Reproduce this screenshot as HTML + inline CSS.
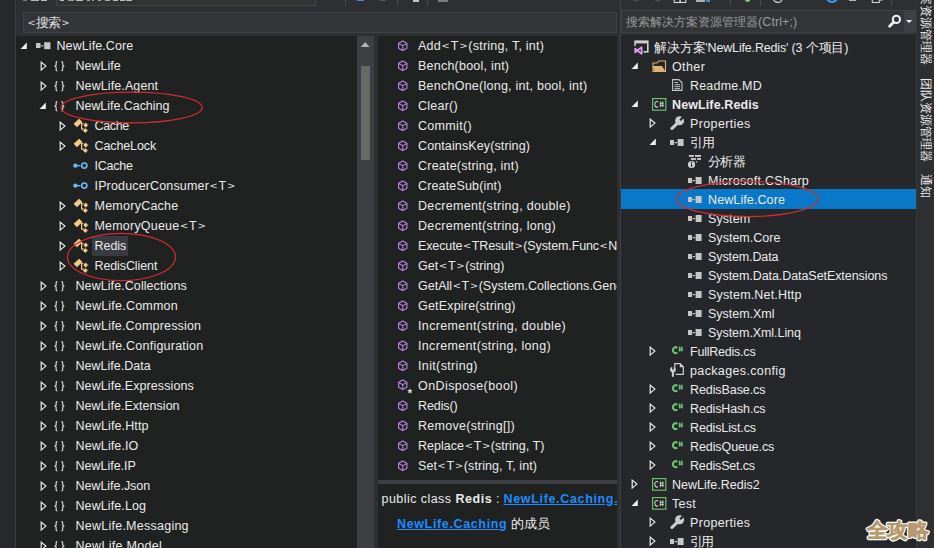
<!DOCTYPE html>
<html><head><meta charset="utf-8">
<style>
*{margin:0;padding:0;box-sizing:border-box}
html,body{width:934px;height:548px;overflow:hidden;background:#2d2f33;font-family:"Liberation Sans",sans-serif;font-size:12.5px;color:#ebebeb}
.a{position:absolute;display:block}
.t{position:absolute;white-space:nowrap;line-height:20px;height:20px}
.s{position:absolute;white-space:nowrap;line-height:19px;height:19px}
.clip{position:absolute;overflow:hidden}
u{text-decoration:underline}
.lt{display:inline-block;transform:scale(1.0,0.72);margin:0 1.1px}
</style></head><body>
<div class="a" style="left:0;top:0;width:15px;height:548px;background:#26282c"></div>
<div class="a" style="left:15px;top:0;width:1px;height:548px;background:#3b3d41"></div>
<div class="a" style="left:23px;top:12px;width:594px;height:21px;background:#333539;border:1px solid #404246"></div>
<div class="t" style="left:27px;top:12.5px;color:#e0e0e0;letter-spacing:-0.6px"><span class="lt">&lt;</span>搜索<span class="lt">&gt;</span></div>
<div class="a" style="left:56px;top:-14px;width:260px;height:20px;background:#333333;border:1px solid #464646"></div>
<div class="a" style="left:23px;top:0;width:4px;height:1.2px;background:#8a8c90;opacity:0.8"></div>
<div class="a" style="left:31px;top:0;width:8px;height:1.2px;background:#e0e0e0;opacity:0.8"></div>
<div class="a" style="left:41px;top:0;width:6px;height:1.2px;background:#e0e0e0;opacity:0.8"></div>
<div class="a" style="left:60px;top:0;width:4px;height:1.2px;background:#e0e0e0;opacity:0.8"></div>
<div class="a" style="left:68px;top:0;width:6px;height:1.2px;background:#b8b8b8;opacity:0.8"></div>
<div class="a" style="left:76px;top:0;width:7px;height:1.2px;background:#e0e0e0;opacity:0.8"></div>
<div class="a" style="left:87px;top:0;width:3px;height:1.2px;background:#c8c8c8;opacity:0.8"></div>
<div class="a" style="left:91.5px;top:0;width:2.5px;height:1.2px;background:#b0b0b0;opacity:0.8"></div>
<div class="a" style="left:97.5px;top:0;width:3.0px;height:1.2px;background:#c0c0c0;opacity:0.8"></div>
<div class="a" style="left:105px;top:0;width:5px;height:1.2px;background:#c8c8c8;opacity:0.8"></div>
<div class="a" style="left:112.5px;top:0;width:5.5px;height:1.2px;background:#e0e0e0;opacity:0.8"></div>
<div class="a" style="left:120px;top:0;width:4.5px;height:1.2px;background:#e0e0e0;opacity:0.8"></div>
<div class="a" style="left:125.5px;top:0;width:6.5px;height:1.2px;background:#e0e0e0;opacity:0.8"></div>
<div class="a" style="left:357px;top:0;width:7px;height:1.2px;background:#4aa0e8;opacity:0.8"></div>
<div class="a" style="left:379px;top:0;width:6.5px;height:1.2px;background:#5a5a5a;opacity:0.8"></div>
<div class="a" style="left:412.5px;top:0;width:6.5px;height:1.5px;background:#e8e8e8;opacity:0.8"></div>
<div class="a" style="left:438px;top:0;width:10px;height:1.5px;background:#909090;opacity:0.8"></div>
<div class="a" style="left:696px;top:0;width:9px;height:1.5px;background:#d0d0d0;opacity:0.8"></div>
<div class="a" style="left:706px;top:0;width:4px;height:2.2px;background:#4aa0e8;opacity:0.8"></div>
<div class="a" style="left:849px;top:0;width:7px;height:1.2px;background:#e0e0e0;opacity:0.8"></div>
<div class="a" style="left:345px;top:0;width:1px;height:5.5px;background:#4a4a4e"></div>
<div class="a" style="left:397px;top:0;width:1px;height:5.5px;background:#4a4a4e"></div>
<div class="a" style="left:427px;top:0;width:1px;height:5.5px;background:#4a4a4e"></div>
<div class="a" style="left:730px;top:0;width:1px;height:5.5px;background:#4a4a4e"></div>
<div class="a" style="left:760px;top:0;width:1px;height:5.5px;background:#4a4a4e"></div>
<div class="a" style="left:891px;top:0;width:1px;height:5.5px;background:#4a4a4e"></div>
<svg class="a" style="left:0;top:0" width="934" height="8"><circle cx="636" cy="-3" r="4.6" fill="#4a4c50"/><circle cx="657.7" cy="-3" r="4.6" fill="#4a4c50"/><rect x="674.2" y="-4" width="11.6" height="6.5" fill="none" stroke="#d8d8d8" stroke-width="1.1"/><rect x="679.4" y="-4" width="1.4" height="6" fill="#d8d8d8"/><circle cx="747.6" cy="-0.5" r="2.6" fill="#7ad07a"/><circle cx="777.8" cy="-2.2" r="4.6" fill="none" stroke="#d8d8d8" stroke-width="1.2"/><circle cx="832" cy="-3" r="5" fill="none" stroke="#4aa0e8" stroke-width="2.2"/><rect x="872.3" y="-4" width="7" height="6.5" fill="none" stroke="#d0d0d0" stroke-width="1.1"/><rect x="880" y="-1" width="2.6" height="1.6" fill="#d0d0d0"/></svg>
<div class="clip" style="left:16px;top:36px;width:341px;height:512px;background:#202221">
<svg class="a" style="left:4px;top:6px" width="8" height="8"><polygon points="0.5,7 6.8,0.6 6.8,7" fill="#f0f0f0"/></svg>
<svg class="a" style="left:20px;top:6px" width="16" height="9"><rect x="0" y="1" width="4.5" height="5" fill="#c6c6c6"/><rect x="5" y="3.2" width="2.5" height="1.2" fill="#c6c6c6"/><rect x="8.2" y="0.2" width="6.2" height="7" fill="#c6c6c6"/></svg>
<div class="t" style="left:40.5px;top:0px;letter-spacing:0.085px;">NewLife.Core</div>
<svg class="a" style="left:24px;top:25px" width="8" height="11"><polygon points="1.2,1.1 5.9,5.1 1.2,9.1" fill="none" stroke="#f2f2f2" stroke-width="1.15"/></svg>
<svg class="a" style="left:38px;top:25px" width="12" height="11"><path d="M3.4,0.6 C1.8,0.6 2.2,2 2.2,3.6 C2.2,4.8 1.4,5 0.6,5.2 C1.4,5.4 2.2,5.6 2.2,6.8 C2.2,8.4 1.8,9.8 3.4,9.8" fill="none" stroke="#c8c8c8" stroke-width="1.3"/><path d="M7.4,0.6 C9,0.6 8.6,2 8.6,3.6 C8.6,4.8 9.4,5 10.2,5.2 C9.4,5.4 8.6,5.6 8.6,6.8 C8.6,8.4 9,9.8 7.4,9.8" fill="none" stroke="#c8c8c8" stroke-width="1.3"/></svg>
<div class="t" style="left:59.5px;top:20px;letter-spacing:0.020px;">NewLife</div>
<svg class="a" style="left:24px;top:45px" width="8" height="11"><polygon points="1.2,1.1 5.9,5.1 1.2,9.1" fill="none" stroke="#f2f2f2" stroke-width="1.15"/></svg>
<svg class="a" style="left:38px;top:45px" width="12" height="11"><path d="M3.4,0.6 C1.8,0.6 2.2,2 2.2,3.6 C2.2,4.8 1.4,5 0.6,5.2 C1.4,5.4 2.2,5.6 2.2,6.8 C2.2,8.4 1.8,9.8 3.4,9.8" fill="none" stroke="#c8c8c8" stroke-width="1.3"/><path d="M7.4,0.6 C9,0.6 8.6,2 8.6,3.6 C8.6,4.8 9.4,5 10.2,5.2 C9.4,5.4 8.6,5.6 8.6,6.8 C8.6,8.4 9,9.8 7.4,9.8" fill="none" stroke="#c8c8c8" stroke-width="1.3"/></svg>
<div class="t" style="left:59.5px;top:40px;letter-spacing:0.096px;">NewLife.Agent</div>
<svg class="a" style="left:23px;top:66px" width="8" height="8"><polygon points="0.5,7 6.8,0.6 6.8,7" fill="#f0f0f0"/></svg>
<svg class="a" style="left:38px;top:65px" width="12" height="11"><path d="M3.4,0.6 C1.8,0.6 2.2,2 2.2,3.6 C2.2,4.8 1.4,5 0.6,5.2 C1.4,5.4 2.2,5.6 2.2,6.8 C2.2,8.4 1.8,9.8 3.4,9.8" fill="none" stroke="#c8c8c8" stroke-width="1.3"/><path d="M7.4,0.6 C9,0.6 8.6,2 8.6,3.6 C8.6,4.8 9.4,5 10.2,5.2 C9.4,5.4 8.6,5.6 8.6,6.8 C8.6,8.4 9,9.8 7.4,9.8" fill="none" stroke="#c8c8c8" stroke-width="1.3"/></svg>
<div class="t" style="left:59.5px;top:60px;letter-spacing:-0.045px;">NewLife.Caching</div>
<svg class="a" style="left:43px;top:85px" width="8" height="11"><polygon points="1.2,1.1 5.9,5.1 1.2,9.1" fill="none" stroke="#f2f2f2" stroke-width="1.15"/></svg>
<svg class="a" style="left:57px;top:82px" width="17" height="17"><polygon points="0.6,5.8 6.1,0.7 9.4,4 3.9,9.3" fill="#f2c98b"/><path d="M8,5.7 H10.4 M8.6,5.7 V11.2 H11.4" fill="none" stroke="#f2c98b" stroke-width="1.2"/><polygon points="9.9,7.1 12.7,4.3 15.5,7.1 12.7,9.9" fill="#f2c98b" stroke="#202221" stroke-width="0.7"/><polygon points="9.5,12.5 12.3,9.7 15.1,12.5 12.3,15.3" fill="#f2c98b" stroke="#202221" stroke-width="0.7"/></svg>
<div class="t" style="left:78.5px;top:80px;letter-spacing:-0.338px;">Cache</div>
<svg class="a" style="left:43px;top:105px" width="8" height="11"><polygon points="1.2,1.1 5.9,5.1 1.2,9.1" fill="none" stroke="#f2f2f2" stroke-width="1.15"/></svg>
<svg class="a" style="left:57px;top:102px" width="17" height="17"><polygon points="0.6,5.8 6.1,0.7 9.4,4 3.9,9.3" fill="#f2c98b"/><path d="M8,5.7 H10.4 M8.6,5.7 V11.2 H11.4" fill="none" stroke="#f2c98b" stroke-width="1.2"/><polygon points="9.9,7.1 12.7,4.3 15.5,7.1 12.7,9.9" fill="#f2c98b" stroke="#202221" stroke-width="0.7"/><polygon points="9.5,12.5 12.3,9.7 15.1,12.5 12.3,15.3" fill="#f2c98b" stroke="#202221" stroke-width="0.7"/></svg>
<div class="t" style="left:78.5px;top:100px;letter-spacing:-0.103px;">CacheLock</div>
<svg class="a" style="left:57px;top:126px" width="16" height="8"><circle cx="2.4" cy="3.6" r="2.2" fill="#6cb8f4"/><rect x="3.5" y="3" width="4" height="1.3" fill="#6cb8f4"/><circle cx="11.3" cy="3.6" r="2.6" fill="none" stroke="#6cb8f4" stroke-width="1.6"/></svg>
<div class="t" style="left:78.5px;top:120px;letter-spacing:-0.219px;">ICache</div>
<svg class="a" style="left:57px;top:146px" width="16" height="8"><circle cx="2.4" cy="3.6" r="2.2" fill="#6cb8f4"/><rect x="3.5" y="3" width="4" height="1.3" fill="#6cb8f4"/><circle cx="11.3" cy="3.6" r="2.6" fill="none" stroke="#6cb8f4" stroke-width="1.6"/></svg>
<div class="t" style="left:78.5px;top:140px;letter-spacing:0.153px;">IProducerConsumer<span class="lt">&lt;</span>T<span class="lt">&gt;</span></div>
<svg class="a" style="left:43px;top:165px" width="8" height="11"><polygon points="1.2,1.1 5.9,5.1 1.2,9.1" fill="none" stroke="#f2f2f2" stroke-width="1.15"/></svg>
<svg class="a" style="left:57px;top:162px" width="17" height="17"><polygon points="0.6,5.8 6.1,0.7 9.4,4 3.9,9.3" fill="#f2c98b"/><path d="M8,5.7 H10.4 M8.6,5.7 V11.2 H11.4" fill="none" stroke="#f2c98b" stroke-width="1.2"/><polygon points="9.9,7.1 12.7,4.3 15.5,7.1 12.7,9.9" fill="#f2c98b" stroke="#202221" stroke-width="0.7"/><polygon points="9.5,12.5 12.3,9.7 15.1,12.5 12.3,15.3" fill="#f2c98b" stroke="#202221" stroke-width="0.7"/></svg>
<div class="t" style="left:78.5px;top:160px;letter-spacing:0.248px;">MemoryCache</div>
<svg class="a" style="left:43px;top:185px" width="8" height="11"><polygon points="1.2,1.1 5.9,5.1 1.2,9.1" fill="none" stroke="#f2f2f2" stroke-width="1.15"/></svg>
<svg class="a" style="left:57px;top:182px" width="17" height="17"><polygon points="0.6,5.8 6.1,0.7 9.4,4 3.9,9.3" fill="#f2c98b"/><path d="M8,5.7 H10.4 M8.6,5.7 V11.2 H11.4" fill="none" stroke="#f2c98b" stroke-width="1.2"/><polygon points="9.9,7.1 12.7,4.3 15.5,7.1 12.7,9.9" fill="#f2c98b" stroke="#202221" stroke-width="0.7"/><polygon points="9.5,12.5 12.3,9.7 15.1,12.5 12.3,15.3" fill="#f2c98b" stroke="#202221" stroke-width="0.7"/></svg>
<div class="t" style="left:78.5px;top:180px;letter-spacing:0.199px;">MemoryQueue<span class="lt">&lt;</span>T<span class="lt">&gt;</span></div>
<svg class="a" style="left:43px;top:205px" width="8" height="11"><polygon points="1.2,1.1 5.9,5.1 1.2,9.1" fill="none" stroke="#f2f2f2" stroke-width="1.15"/></svg>
<svg class="a" style="left:57px;top:202px" width="17" height="17"><polygon points="0.6,5.8 6.1,0.7 9.4,4 3.9,9.3" fill="#f2c98b"/><path d="M8,5.7 H10.4 M8.6,5.7 V11.2 H11.4" fill="none" stroke="#f2c98b" stroke-width="1.2"/><polygon points="9.9,7.1 12.7,4.3 15.5,7.1 12.7,9.9" fill="#f2c98b" stroke="#202221" stroke-width="0.7"/><polygon points="9.5,12.5 12.3,9.7 15.1,12.5 12.3,15.3" fill="#f2c98b" stroke="#202221" stroke-width="0.7"/></svg>
<div class="a" style="left:76px;top:200px;width:36px;height:20px;background:#383b42"></div>
<div class="t" style="left:78.5px;top:200px;letter-spacing:-0.046px;">Redis</div>
<svg class="a" style="left:43px;top:225px" width="8" height="11"><polygon points="1.2,1.1 5.9,5.1 1.2,9.1" fill="none" stroke="#f2f2f2" stroke-width="1.15"/></svg>
<svg class="a" style="left:57px;top:222px" width="17" height="17"><polygon points="0.6,5.8 6.1,0.7 9.4,4 3.9,9.3" fill="#f2c98b"/><path d="M8,5.7 H10.4 M8.6,5.7 V11.2 H11.4" fill="none" stroke="#f2c98b" stroke-width="1.2"/><polygon points="9.9,7.1 12.7,4.3 15.5,7.1 12.7,9.9" fill="#f2c98b" stroke="#202221" stroke-width="0.7"/><polygon points="9.5,12.5 12.3,9.7 15.1,12.5 12.3,15.3" fill="#f2c98b" stroke="#202221" stroke-width="0.7"/></svg>
<div class="t" style="left:78.5px;top:220px;letter-spacing:-0.104px;">RedisClient</div>
<svg class="a" style="left:24px;top:245px" width="8" height="11"><polygon points="1.2,1.1 5.9,5.1 1.2,9.1" fill="none" stroke="#f2f2f2" stroke-width="1.15"/></svg>
<svg class="a" style="left:38px;top:245px" width="12" height="11"><path d="M3.4,0.6 C1.8,0.6 2.2,2 2.2,3.6 C2.2,4.8 1.4,5 0.6,5.2 C1.4,5.4 2.2,5.6 2.2,6.8 C2.2,8.4 1.8,9.8 3.4,9.8" fill="none" stroke="#c8c8c8" stroke-width="1.3"/><path d="M7.4,0.6 C9,0.6 8.6,2 8.6,3.6 C8.6,4.8 9.4,5 10.2,5.2 C9.4,5.4 8.6,5.6 8.6,6.8 C8.6,8.4 9,9.8 7.4,9.8" fill="none" stroke="#c8c8c8" stroke-width="1.3"/></svg>
<div class="t" style="left:59.5px;top:240px;letter-spacing:0.077px;">NewLife.Collections</div>
<svg class="a" style="left:24px;top:265px" width="8" height="11"><polygon points="1.2,1.1 5.9,5.1 1.2,9.1" fill="none" stroke="#f2f2f2" stroke-width="1.15"/></svg>
<svg class="a" style="left:38px;top:265px" width="12" height="11"><path d="M3.4,0.6 C1.8,0.6 2.2,2 2.2,3.6 C2.2,4.8 1.4,5 0.6,5.2 C1.4,5.4 2.2,5.6 2.2,6.8 C2.2,8.4 1.8,9.8 3.4,9.8" fill="none" stroke="#c8c8c8" stroke-width="1.3"/><path d="M7.4,0.6 C9,0.6 8.6,2 8.6,3.6 C8.6,4.8 9.4,5 10.2,5.2 C9.4,5.4 8.6,5.6 8.6,6.8 C8.6,8.4 9,9.8 7.4,9.8" fill="none" stroke="#c8c8c8" stroke-width="1.3"/></svg>
<div class="t" style="left:59.5px;top:260px;letter-spacing:0.220px;">NewLife.Common</div>
<svg class="a" style="left:24px;top:285px" width="8" height="11"><polygon points="1.2,1.1 5.9,5.1 1.2,9.1" fill="none" stroke="#f2f2f2" stroke-width="1.15"/></svg>
<svg class="a" style="left:38px;top:285px" width="12" height="11"><path d="M3.4,0.6 C1.8,0.6 2.2,2 2.2,3.6 C2.2,4.8 1.4,5 0.6,5.2 C1.4,5.4 2.2,5.6 2.2,6.8 C2.2,8.4 1.8,9.8 3.4,9.8" fill="none" stroke="#c8c8c8" stroke-width="1.3"/><path d="M7.4,0.6 C9,0.6 8.6,2 8.6,3.6 C8.6,4.8 9.4,5 10.2,5.2 C9.4,5.4 8.6,5.6 8.6,6.8 C8.6,8.4 9,9.8 7.4,9.8" fill="none" stroke="#c8c8c8" stroke-width="1.3"/></svg>
<div class="t" style="left:59.5px;top:280px;letter-spacing:0.182px;">NewLife.Compression</div>
<svg class="a" style="left:24px;top:305px" width="8" height="11"><polygon points="1.2,1.1 5.9,5.1 1.2,9.1" fill="none" stroke="#f2f2f2" stroke-width="1.15"/></svg>
<svg class="a" style="left:38px;top:305px" width="12" height="11"><path d="M3.4,0.6 C1.8,0.6 2.2,2 2.2,3.6 C2.2,4.8 1.4,5 0.6,5.2 C1.4,5.4 2.2,5.6 2.2,6.8 C2.2,8.4 1.8,9.8 3.4,9.8" fill="none" stroke="#c8c8c8" stroke-width="1.3"/><path d="M7.4,0.6 C9,0.6 8.6,2 8.6,3.6 C8.6,4.8 9.4,5 10.2,5.2 C9.4,5.4 8.6,5.6 8.6,6.8 C8.6,8.4 9,9.8 7.4,9.8" fill="none" stroke="#c8c8c8" stroke-width="1.3"/></svg>
<div class="t" style="left:59.5px;top:300px;letter-spacing:0.237px;">NewLife.Configuration</div>
<svg class="a" style="left:24px;top:325px" width="8" height="11"><polygon points="1.2,1.1 5.9,5.1 1.2,9.1" fill="none" stroke="#f2f2f2" stroke-width="1.15"/></svg>
<svg class="a" style="left:38px;top:325px" width="12" height="11"><path d="M3.4,0.6 C1.8,0.6 2.2,2 2.2,3.6 C2.2,4.8 1.4,5 0.6,5.2 C1.4,5.4 2.2,5.6 2.2,6.8 C2.2,8.4 1.8,9.8 3.4,9.8" fill="none" stroke="#c8c8c8" stroke-width="1.3"/><path d="M7.4,0.6 C9,0.6 8.6,2 8.6,3.6 C8.6,4.8 9.4,5 10.2,5.2 C9.4,5.4 8.6,5.6 8.6,6.8 C8.6,8.4 9,9.8 7.4,9.8" fill="none" stroke="#c8c8c8" stroke-width="1.3"/></svg>
<div class="t" style="left:59.5px;top:320px;letter-spacing:0.020px;">NewLife.Data</div>
<svg class="a" style="left:24px;top:345px" width="8" height="11"><polygon points="1.2,1.1 5.9,5.1 1.2,9.1" fill="none" stroke="#f2f2f2" stroke-width="1.15"/></svg>
<svg class="a" style="left:38px;top:345px" width="12" height="11"><path d="M3.4,0.6 C1.8,0.6 2.2,2 2.2,3.6 C2.2,4.8 1.4,5 0.6,5.2 C1.4,5.4 2.2,5.6 2.2,6.8 C2.2,8.4 1.8,9.8 3.4,9.8" fill="none" stroke="#c8c8c8" stroke-width="1.3"/><path d="M7.4,0.6 C9,0.6 8.6,2 8.6,3.6 C8.6,4.8 9.4,5 10.2,5.2 C9.4,5.4 8.6,5.6 8.6,6.8 C8.6,8.4 9,9.8 7.4,9.8" fill="none" stroke="#c8c8c8" stroke-width="1.3"/></svg>
<div class="t" style="left:59.5px;top:340px;letter-spacing:0.083px;">NewLife.Expressions</div>
<svg class="a" style="left:24px;top:365px" width="8" height="11"><polygon points="1.2,1.1 5.9,5.1 1.2,9.1" fill="none" stroke="#f2f2f2" stroke-width="1.15"/></svg>
<svg class="a" style="left:38px;top:365px" width="12" height="11"><path d="M3.4,0.6 C1.8,0.6 2.2,2 2.2,3.6 C2.2,4.8 1.4,5 0.6,5.2 C1.4,5.4 2.2,5.6 2.2,6.8 C2.2,8.4 1.8,9.8 3.4,9.8" fill="none" stroke="#c8c8c8" stroke-width="1.3"/><path d="M7.4,0.6 C9,0.6 8.6,2 8.6,3.6 C8.6,4.8 9.4,5 10.2,5.2 C9.4,5.4 8.6,5.6 8.6,6.8 C8.6,8.4 9,9.8 7.4,9.8" fill="none" stroke="#c8c8c8" stroke-width="1.3"/></svg>
<div class="t" style="left:59.5px;top:360px;letter-spacing:0.034px;">NewLife.Extension</div>
<svg class="a" style="left:24px;top:385px" width="8" height="11"><polygon points="1.2,1.1 5.9,5.1 1.2,9.1" fill="none" stroke="#f2f2f2" stroke-width="1.15"/></svg>
<svg class="a" style="left:38px;top:385px" width="12" height="11"><path d="M3.4,0.6 C1.8,0.6 2.2,2 2.2,3.6 C2.2,4.8 1.4,5 0.6,5.2 C1.4,5.4 2.2,5.6 2.2,6.8 C2.2,8.4 1.8,9.8 3.4,9.8" fill="none" stroke="#c8c8c8" stroke-width="1.3"/><path d="M7.4,0.6 C9,0.6 8.6,2 8.6,3.6 C8.6,4.8 9.4,5 10.2,5.2 C9.4,5.4 8.6,5.6 8.6,6.8 C8.6,8.4 9,9.8 7.4,9.8" fill="none" stroke="#c8c8c8" stroke-width="1.3"/></svg>
<div class="t" style="left:59.5px;top:380px;letter-spacing:0.128px;">NewLife.Http</div>
<svg class="a" style="left:24px;top:405px" width="8" height="11"><polygon points="1.2,1.1 5.9,5.1 1.2,9.1" fill="none" stroke="#f2f2f2" stroke-width="1.15"/></svg>
<svg class="a" style="left:38px;top:405px" width="12" height="11"><path d="M3.4,0.6 C1.8,0.6 2.2,2 2.2,3.6 C2.2,4.8 1.4,5 0.6,5.2 C1.4,5.4 2.2,5.6 2.2,6.8 C2.2,8.4 1.8,9.8 3.4,9.8" fill="none" stroke="#c8c8c8" stroke-width="1.3"/><path d="M7.4,0.6 C9,0.6 8.6,2 8.6,3.6 C8.6,4.8 9.4,5 10.2,5.2 C9.4,5.4 8.6,5.6 8.6,6.8 C8.6,8.4 9,9.8 7.4,9.8" fill="none" stroke="#c8c8c8" stroke-width="1.3"/></svg>
<div class="t" style="left:59.5px;top:400px;letter-spacing:0.107px;">NewLife.IO</div>
<svg class="a" style="left:24px;top:425px" width="8" height="11"><polygon points="1.2,1.1 5.9,5.1 1.2,9.1" fill="none" stroke="#f2f2f2" stroke-width="1.15"/></svg>
<svg class="a" style="left:38px;top:425px" width="12" height="11"><path d="M3.4,0.6 C1.8,0.6 2.2,2 2.2,3.6 C2.2,4.8 1.4,5 0.6,5.2 C1.4,5.4 2.2,5.6 2.2,6.8 C2.2,8.4 1.8,9.8 3.4,9.8" fill="none" stroke="#c8c8c8" stroke-width="1.3"/><path d="M7.4,0.6 C9,0.6 8.6,2 8.6,3.6 C8.6,4.8 9.4,5 10.2,5.2 C9.4,5.4 8.6,5.6 8.6,6.8 C8.6,8.4 9,9.8 7.4,9.8" fill="none" stroke="#c8c8c8" stroke-width="1.3"/></svg>
<div class="t" style="left:59.5px;top:420px;letter-spacing:-0.011px;">NewLife.IP</div>
<svg class="a" style="left:24px;top:445px" width="8" height="11"><polygon points="1.2,1.1 5.9,5.1 1.2,9.1" fill="none" stroke="#f2f2f2" stroke-width="1.15"/></svg>
<svg class="a" style="left:38px;top:445px" width="12" height="11"><path d="M3.4,0.6 C1.8,0.6 2.2,2 2.2,3.6 C2.2,4.8 1.4,5 0.6,5.2 C1.4,5.4 2.2,5.6 2.2,6.8 C2.2,8.4 1.8,9.8 3.4,9.8" fill="none" stroke="#c8c8c8" stroke-width="1.3"/><path d="M7.4,0.6 C9,0.6 8.6,2 8.6,3.6 C8.6,4.8 9.4,5 10.2,5.2 C9.4,5.4 8.6,5.6 8.6,6.8 C8.6,8.4 9,9.8 7.4,9.8" fill="none" stroke="#c8c8c8" stroke-width="1.3"/></svg>
<div class="t" style="left:59.5px;top:440px;letter-spacing:-0.029px;">NewLife.Json</div>
<svg class="a" style="left:24px;top:465px" width="8" height="11"><polygon points="1.2,1.1 5.9,5.1 1.2,9.1" fill="none" stroke="#f2f2f2" stroke-width="1.15"/></svg>
<svg class="a" style="left:38px;top:465px" width="12" height="11"><path d="M3.4,0.6 C1.8,0.6 2.2,2 2.2,3.6 C2.2,4.8 1.4,5 0.6,5.2 C1.4,5.4 2.2,5.6 2.2,6.8 C2.2,8.4 1.8,9.8 3.4,9.8" fill="none" stroke="#c8c8c8" stroke-width="1.3"/><path d="M7.4,0.6 C9,0.6 8.6,2 8.6,3.6 C8.6,4.8 9.4,5 10.2,5.2 C9.4,5.4 8.6,5.6 8.6,6.8 C8.6,8.4 9,9.8 7.4,9.8" fill="none" stroke="#c8c8c8" stroke-width="1.3"/></svg>
<div class="t" style="left:59.5px;top:460px;letter-spacing:0.097px;">NewLife.Log</div>
<svg class="a" style="left:24px;top:485px" width="8" height="11"><polygon points="1.2,1.1 5.9,5.1 1.2,9.1" fill="none" stroke="#f2f2f2" stroke-width="1.15"/></svg>
<svg class="a" style="left:38px;top:485px" width="12" height="11"><path d="M3.4,0.6 C1.8,0.6 2.2,2 2.2,3.6 C2.2,4.8 1.4,5 0.6,5.2 C1.4,5.4 2.2,5.6 2.2,6.8 C2.2,8.4 1.8,9.8 3.4,9.8" fill="none" stroke="#c8c8c8" stroke-width="1.3"/><path d="M7.4,0.6 C9,0.6 8.6,2 8.6,3.6 C8.6,4.8 9.4,5 10.2,5.2 C9.4,5.4 8.6,5.6 8.6,6.8 C8.6,8.4 9,9.8 7.4,9.8" fill="none" stroke="#c8c8c8" stroke-width="1.3"/></svg>
<div class="t" style="left:59.5px;top:480px;letter-spacing:0.249px;">NewLife.Messaging</div>
<svg class="a" style="left:24px;top:505px" width="8" height="11"><polygon points="1.2,1.1 5.9,5.1 1.2,9.1" fill="none" stroke="#f2f2f2" stroke-width="1.15"/></svg>
<svg class="a" style="left:38px;top:505px" width="12" height="11"><path d="M3.4,0.6 C1.8,0.6 2.2,2 2.2,3.6 C2.2,4.8 1.4,5 0.6,5.2 C1.4,5.4 2.2,5.6 2.2,6.8 C2.2,8.4 1.8,9.8 3.4,9.8" fill="none" stroke="#c8c8c8" stroke-width="1.3"/><path d="M7.4,0.6 C9,0.6 8.6,2 8.6,3.6 C8.6,4.8 9.4,5 10.2,5.2 C9.4,5.4 8.6,5.6 8.6,6.8 C8.6,8.4 9,9.8 7.4,9.8" fill="none" stroke="#c8c8c8" stroke-width="1.3"/></svg>
<div class="t" style="left:59.5px;top:500px;letter-spacing:0.292px;">NewLife.Model</div>
</div>
<div class="a" style="left:357px;top:36px;width:17px;height:512px;background:#3d3f45"></div>
<svg class="a" style="left:360px;top:41px" width="11" height="7"><polygon points="0.8,6 5.2,1 9.6,6" fill="#b4b4b4"/></svg>
<div class="a" style="left:361px;top:66px;width:9px;height:94px;background:#686868"></div>
<div class="clip" style="left:378px;top:36px;width:239px;height:444px;background:#202221">
<svg class="a" style="left:19.899999999999977px;top:4.4px" width="11" height="12"><polygon points="4.75,0.9 8.9,3.3 8.9,8.2 4.75,10.6 0.6,8.2 0.6,3.3" fill="none" stroke="#b57fdc" stroke-width="1.2"/><path d="M0.8,3.4 L4.75,5.7 L8.7,3.4 M4.75,5.7 V10.4" fill="none" stroke="#b57fdc" stroke-width="1.1"/></svg>
<div class="t" style="left:40px;top:0px;letter-spacing:0.238px;">Add<span class="lt">&lt;</span>T<span class="lt">&gt;</span>(string, T, int)</div>
<svg class="a" style="left:19.899999999999977px;top:24.4px" width="11" height="12"><polygon points="4.75,0.9 8.9,3.3 8.9,8.2 4.75,10.6 0.6,8.2 0.6,3.3" fill="none" stroke="#b57fdc" stroke-width="1.2"/><path d="M0.8,3.4 L4.75,5.7 L8.7,3.4 M4.75,5.7 V10.4" fill="none" stroke="#b57fdc" stroke-width="1.1"/></svg>
<div class="t" style="left:40px;top:20px;letter-spacing:0.232px;">Bench(bool, int)</div>
<svg class="a" style="left:19.899999999999977px;top:44.4px" width="11" height="12"><polygon points="4.75,0.9 8.9,3.3 8.9,8.2 4.75,10.6 0.6,8.2 0.6,3.3" fill="none" stroke="#b57fdc" stroke-width="1.2"/><path d="M0.8,3.4 L4.75,5.7 L8.7,3.4 M4.75,5.7 V10.4" fill="none" stroke="#b57fdc" stroke-width="1.1"/></svg>
<div class="t" style="left:40px;top:40px;letter-spacing:0.250px;">BenchOne(long, int, bool, int)</div>
<svg class="a" style="left:19.899999999999977px;top:64.4px" width="11" height="12"><polygon points="4.75,0.9 8.9,3.3 8.9,8.2 4.75,10.6 0.6,8.2 0.6,3.3" fill="none" stroke="#b57fdc" stroke-width="1.2"/><path d="M0.8,3.4 L4.75,5.7 L8.7,3.4 M4.75,5.7 V10.4" fill="none" stroke="#b57fdc" stroke-width="1.1"/></svg>
<div class="t" style="left:40px;top:60px;letter-spacing:0.234px;">Clear()</div>
<svg class="a" style="left:19.899999999999977px;top:84.4px" width="11" height="12"><polygon points="4.75,0.9 8.9,3.3 8.9,8.2 4.75,10.6 0.6,8.2 0.6,3.3" fill="none" stroke="#b57fdc" stroke-width="1.2"/><path d="M0.8,3.4 L4.75,5.7 L8.7,3.4 M4.75,5.7 V10.4" fill="none" stroke="#b57fdc" stroke-width="1.1"/></svg>
<div class="t" style="left:40px;top:80px;letter-spacing:0.313px;">Commit()</div>
<svg class="a" style="left:19.899999999999977px;top:104.4px" width="11" height="12"><polygon points="4.75,0.9 8.9,3.3 8.9,8.2 4.75,10.6 0.6,8.2 0.6,3.3" fill="none" stroke="#b57fdc" stroke-width="1.2"/><path d="M0.8,3.4 L4.75,5.7 L8.7,3.4 M4.75,5.7 V10.4" fill="none" stroke="#b57fdc" stroke-width="1.1"/></svg>
<div class="t" style="left:40px;top:100px;letter-spacing:0.117px;">ContainsKey(string)</div>
<svg class="a" style="left:19.899999999999977px;top:124.4px" width="11" height="12"><polygon points="4.75,0.9 8.9,3.3 8.9,8.2 4.75,10.6 0.6,8.2 0.6,3.3" fill="none" stroke="#b57fdc" stroke-width="1.2"/><path d="M0.8,3.4 L4.75,5.7 L8.7,3.4 M4.75,5.7 V10.4" fill="none" stroke="#b57fdc" stroke-width="1.1"/></svg>
<div class="t" style="left:40px;top:120px;letter-spacing:0.224px;">Create(string, int)</div>
<svg class="a" style="left:19.899999999999977px;top:144.4px" width="11" height="12"><polygon points="4.75,0.9 8.9,3.3 8.9,8.2 4.75,10.6 0.6,8.2 0.6,3.3" fill="none" stroke="#b57fdc" stroke-width="1.2"/><path d="M0.8,3.4 L4.75,5.7 L8.7,3.4 M4.75,5.7 V10.4" fill="none" stroke="#b57fdc" stroke-width="1.1"/></svg>
<div class="t" style="left:40px;top:140px;letter-spacing:0.155px;">CreateSub(int)</div>
<svg class="a" style="left:19.899999999999977px;top:164.4px" width="11" height="12"><polygon points="4.75,0.9 8.9,3.3 8.9,8.2 4.75,10.6 0.6,8.2 0.6,3.3" fill="none" stroke="#b57fdc" stroke-width="1.2"/><path d="M0.8,3.4 L4.75,5.7 L8.7,3.4 M4.75,5.7 V10.4" fill="none" stroke="#b57fdc" stroke-width="1.1"/></svg>
<div class="t" style="left:40px;top:160px;letter-spacing:0.330px;">Decrement(string, double)</div>
<svg class="a" style="left:19.899999999999977px;top:184.4px" width="11" height="12"><polygon points="4.75,0.9 8.9,3.3 8.9,8.2 4.75,10.6 0.6,8.2 0.6,3.3" fill="none" stroke="#b57fdc" stroke-width="1.2"/><path d="M0.8,3.4 L4.75,5.7 L8.7,3.4 M4.75,5.7 V10.4" fill="none" stroke="#b57fdc" stroke-width="1.1"/></svg>
<div class="t" style="left:40px;top:180px;letter-spacing:0.326px;">Decrement(string, long)</div>
<svg class="a" style="left:19.899999999999977px;top:204.4px" width="11" height="12"><polygon points="4.75,0.9 8.9,3.3 8.9,8.2 4.75,10.6 0.6,8.2 0.6,3.3" fill="none" stroke="#b57fdc" stroke-width="1.2"/><path d="M0.8,3.4 L4.75,5.7 L8.7,3.4 M4.75,5.7 V10.4" fill="none" stroke="#b57fdc" stroke-width="1.1"/></svg>
<div class="t" style="left:40px;top:200px;letter-spacing:-0.120px;">Execute<span class="lt">&lt;</span>TResult<span class="lt">&gt;</span>(System.Func<span class="lt">&lt;</span>NewLife.Caching.Redis</div>
<svg class="a" style="left:19.899999999999977px;top:224.4px" width="11" height="12"><polygon points="4.75,0.9 8.9,3.3 8.9,8.2 4.75,10.6 0.6,8.2 0.6,3.3" fill="none" stroke="#b57fdc" stroke-width="1.2"/><path d="M0.8,3.4 L4.75,5.7 L8.7,3.4 M4.75,5.7 V10.4" fill="none" stroke="#b57fdc" stroke-width="1.1"/></svg>
<div class="t" style="left:40px;top:220px;letter-spacing:0.064px;">Get<span class="lt">&lt;</span>T<span class="lt">&gt;</span>(string)</div>
<svg class="a" style="left:19.899999999999977px;top:244.4px" width="11" height="12"><polygon points="4.75,0.9 8.9,3.3 8.9,8.2 4.75,10.6 0.6,8.2 0.6,3.3" fill="none" stroke="#b57fdc" stroke-width="1.2"/><path d="M0.8,3.4 L4.75,5.7 L8.7,3.4 M4.75,5.7 V10.4" fill="none" stroke="#b57fdc" stroke-width="1.1"/></svg>
<div class="t" style="left:40px;top:240px;">GetAll<span class="lt">&lt;</span>T<span class="lt">&gt;</span>(System.Collections.Generic.IEnumerable</div>
<svg class="a" style="left:19.899999999999977px;top:264.4px" width="11" height="12"><polygon points="4.75,0.9 8.9,3.3 8.9,8.2 4.75,10.6 0.6,8.2 0.6,3.3" fill="none" stroke="#b57fdc" stroke-width="1.2"/><path d="M0.8,3.4 L4.75,5.7 L8.7,3.4 M4.75,5.7 V10.4" fill="none" stroke="#b57fdc" stroke-width="1.1"/></svg>
<div class="t" style="left:40px;top:260px;letter-spacing:0.188px;">GetExpire(string)</div>
<svg class="a" style="left:19.899999999999977px;top:284.4px" width="11" height="12"><polygon points="4.75,0.9 8.9,3.3 8.9,8.2 4.75,10.6 0.6,8.2 0.6,3.3" fill="none" stroke="#b57fdc" stroke-width="1.2"/><path d="M0.8,3.4 L4.75,5.7 L8.7,3.4 M4.75,5.7 V10.4" fill="none" stroke="#b57fdc" stroke-width="1.1"/></svg>
<div class="t" style="left:40px;top:280px;letter-spacing:0.361px;">Increment(string, double)</div>
<svg class="a" style="left:19.899999999999977px;top:304.4px" width="11" height="12"><polygon points="4.75,0.9 8.9,3.3 8.9,8.2 4.75,10.6 0.6,8.2 0.6,3.3" fill="none" stroke="#b57fdc" stroke-width="1.2"/><path d="M0.8,3.4 L4.75,5.7 L8.7,3.4 M4.75,5.7 V10.4" fill="none" stroke="#b57fdc" stroke-width="1.1"/></svg>
<div class="t" style="left:40px;top:300px;letter-spacing:0.344px;">Increment(string, long)</div>
<svg class="a" style="left:19.899999999999977px;top:324.4px" width="11" height="12"><polygon points="4.75,0.9 8.9,3.3 8.9,8.2 4.75,10.6 0.6,8.2 0.6,3.3" fill="none" stroke="#b57fdc" stroke-width="1.2"/><path d="M0.8,3.4 L4.75,5.7 L8.7,3.4 M4.75,5.7 V10.4" fill="none" stroke="#b57fdc" stroke-width="1.1"/></svg>
<div class="t" style="left:40px;top:320px;letter-spacing:0.358px;">Init(string)</div>
<svg class="a" style="left:19.899999999999977px;top:342.59999999999997px" width="11" height="12"><polygon points="4.75,0.9 8.9,3.3 8.9,8.2 4.75,10.6 0.6,8.2 0.6,3.3" fill="none" stroke="#b57fdc" stroke-width="1.2"/><path d="M0.8,3.4 L4.75,5.7 L8.7,3.4 M4.75,5.7 V10.4" fill="none" stroke="#b57fdc" stroke-width="1.1"/></svg><svg class="a" style="left:29.099999999999977px;top:351.79999999999995px" width="7" height="7"><polygon points="2.9,0.2 3.6,2.1 5.7,2.2 4.1,3.5 4.6,5.6 2.9,4.4 1.2,5.6 1.7,3.5 0.1,2.2 2.2,2.1" fill="#dcdcdc"/></svg>
<div class="t" style="left:40px;top:340px;letter-spacing:0.419px;">OnDispose(bool)</div>
<svg class="a" style="left:19.899999999999977px;top:364.4px" width="11" height="12"><polygon points="4.75,0.9 8.9,3.3 8.9,8.2 4.75,10.6 0.6,8.2 0.6,3.3" fill="none" stroke="#b57fdc" stroke-width="1.2"/><path d="M0.8,3.4 L4.75,5.7 L8.7,3.4 M4.75,5.7 V10.4" fill="none" stroke="#b57fdc" stroke-width="1.1"/></svg>
<div class="t" style="left:40px;top:360px;letter-spacing:-0.097px;">Redis()</div>
<svg class="a" style="left:19.899999999999977px;top:384.4px" width="11" height="12"><polygon points="4.75,0.9 8.9,3.3 8.9,8.2 4.75,10.6 0.6,8.2 0.6,3.3" fill="none" stroke="#b57fdc" stroke-width="1.2"/><path d="M0.8,3.4 L4.75,5.7 L8.7,3.4 M4.75,5.7 V10.4" fill="none" stroke="#b57fdc" stroke-width="1.1"/></svg>
<div class="t" style="left:40px;top:380px;letter-spacing:0.285px;">Remove(string[])</div>
<svg class="a" style="left:19.899999999999977px;top:404.4px" width="11" height="12"><polygon points="4.75,0.9 8.9,3.3 8.9,8.2 4.75,10.6 0.6,8.2 0.6,3.3" fill="none" stroke="#b57fdc" stroke-width="1.2"/><path d="M0.8,3.4 L4.75,5.7 L8.7,3.4 M4.75,5.7 V10.4" fill="none" stroke="#b57fdc" stroke-width="1.1"/></svg>
<div class="t" style="left:40px;top:400px;letter-spacing:0.035px;">Replace<span class="lt">&lt;</span>T<span class="lt">&gt;</span>(string, T)</div>
<svg class="a" style="left:19.899999999999977px;top:424.4px" width="11" height="12"><polygon points="4.75,0.9 8.9,3.3 8.9,8.2 4.75,10.6 0.6,8.2 0.6,3.3" fill="none" stroke="#b57fdc" stroke-width="1.2"/><path d="M0.8,3.4 L4.75,5.7 L8.7,3.4 M4.75,5.7 V10.4" fill="none" stroke="#b57fdc" stroke-width="1.1"/></svg>
<div class="t" style="left:40px;top:420px;letter-spacing:0.072px;">Set<span class="lt">&lt;</span>T<span class="lt">&gt;</span>(string, T, int)</div>
</div>
<div class="a" style="left:378px;top:480px;width:239px;height:4px;background:#3d3f45"></div>
<div class="clip" style="left:378px;top:484px;width:239px;height:64px;background:#202221">
<div class="t" style="left:3.5px;top:4.5px"><span style="letter-spacing:0.45px">public class </span><b style="letter-spacing:0.55px">Redis</b><span style="letter-spacing:0.3px"> : </span><b><u style="color:#1a8cff;letter-spacing:0.66px">NewLife.Caching.RedisBase</u></b></div>
<div class="t" style="left:19px;top:29.5px"><b><u style="color:#1a8cff;letter-spacing:0.64px">NewLife.Caching</u></b><span style="letter-spacing:0.2px"> 的成员</span></div>
</div>
<div class="a" style="left:620px;top:0;width:1px;height:548px;background:#3f4044"></div>
<div class="a" style="left:621px;top:10px;width:295px;height:23px;background:#333539;border:1px solid #404246"></div>
<div class="a" style="left:904px;top:11px;width:12px;height:21px;background:#3f3f46"></div>
<svg class="a" style="left:886px;top:13px" width="30" height="16"><circle cx="10.4" cy="6.4" r="3.6" fill="none" stroke="#f0f0f0" stroke-width="2.1"/><path d="M7.8,9 L3.6,13.2" stroke="#f0f0f0" stroke-width="2.8" stroke-linecap="round"/><polygon points="20,7 26.2,7 23.1,10" fill="#f0f0f0"/></svg>
<div class="t" style="left:626px;top:12px;color:#9a9a9a;font-size:12px">搜索解决方案资源管理器<span style="font-size:12.5px;letter-spacing:0.1px">(Ctrl+;)</span></div>
<div class="clip" style="left:621px;top:35px;width:295px;height:513px;background:#25272b">
<svg class="a" style="left:12.5px;top:4.5px" width="16" height="16"><rect x="0.3" y="0.4" width="14.3" height="12.2" fill="#d0d0d0"/><rect x="1.8" y="3.4" width="11.2" height="7.6" fill="#262626"/><rect x="0" y="6" width="9.5" height="10" fill="#25272b"/><path d="M1.2,8.6 L3.6,10.5 L1.2,12.4 Z" fill="none" stroke="#e29ef0" stroke-width="1.7" stroke-linejoin="round"/><path d="M7.6,7.2 V13.8 L3.4,10.5 Z" fill="none" stroke="#e29ef0" stroke-width="1.7" stroke-linejoin="round"/></svg>
<div class="s" style="left:33px;top:4px;letter-spacing:-0.163px;">解决方案&#x27;NewLife.Redis&#x27; (3 个项目)</div>
<svg class="a" style="left:10px;top:27px" width="8" height="8"><polygon points="0.5,7 6.8,0.6 6.8,7" fill="#f0f0f0"/></svg>
<svg class="a" style="left:31px;top:24.5px" width="16" height="13"><path d="M1,11.5 V3 H5 L6.5,1 H13.5 V11.5 Z" fill="#262626" stroke="#dcb27a" stroke-width="1.1"/><path d="M0.5,6 H10 L13.5,11.5 H2.5 Z" fill="#dcb27a"/></svg>
<div class="s" style="left:51px;top:23px;letter-spacing:0.396px;">Other</div>
<svg class="a" style="left:50.5px;top:44px" width="12" height="13"><path d="M0.6,0.6 H6.8 L10,3.8 V11.4 H0.6 Z" fill="none" stroke="#c6c6c6" stroke-width="1.1"/><path d="M2.5,3.5 H6 M2.5,5.7 H8 M2.5,7.7 H8 M2.5,9.6 H8" stroke="#c6c6c6" stroke-width="1"/></svg>
<div class="s" style="left:69px;top:42px;letter-spacing:0.197px;">Readme.MD</div>
<svg class="a" style="left:10px;top:65px" width="8" height="8"><polygon points="0.5,7 6.8,0.6 6.8,7" fill="#f0f0f0"/></svg>
<svg class="a" style="left:31px;top:62.7px" width="15" height="13"><rect x="0.6" y="0.6" width="13.2" height="11.6" fill="#262626" stroke="#6abf6a" stroke-width="1.2"/><path d="M6.2,4 A2.3,2.7 0 1 0 6.2,8.6" fill="none" stroke="#d6d6d6" stroke-width="1.1"/><path d="M8.6,3.4 V9.2 M10.8,3.4 V9.2 M7.6,5.2 H11.8 M7.6,7.4 H11.8" stroke="#d6d6d6" stroke-width="0.9"/></svg>
<div class="s" style="left:51px;top:61px;letter-spacing:0.109px;"><b>NewLife.Redis</b></div>
<svg class="a" style="left:28px;top:82.5px" width="8" height="11"><polygon points="1.2,1.1 5.9,5.1 1.2,9.1" fill="none" stroke="#f2f2f2" stroke-width="1.15"/></svg>
<svg class="a" style="left:49px;top:81px" width="16" height="15"><path d="M7.8,6.8 L2,12.4" stroke="#cdcdcd" stroke-width="3.1" stroke-linecap="round"/><circle cx="9.6" cy="4.8" r="4.5" fill="#cdcdcd"/><path d="M10.2,4.2 L14.6,-0.2" stroke="#25272b" stroke-width="2.3"/></svg>
<div class="s" style="left:69px;top:80px;letter-spacing:0.368px;">Properties</div>
<svg class="a" style="left:28px;top:103px" width="8" height="8"><polygon points="0.5,7 6.8,0.6 6.8,7" fill="#f0f0f0"/></svg>
<svg class="a" style="left:49px;top:103.5px" width="16" height="9"><rect x="0" y="1" width="4" height="5" fill="#c6c6c6"/><rect x="4.5" y="3" width="2.5" height="1.2" fill="#c6c6c6"/><rect x="7.6" y="0" width="6" height="7" fill="#c6c6c6"/></svg>
<div class="s" style="left:69px;top:99px;letter-spacing:-1.299px;">引用</div>
<svg class="a" style="left:67px;top:120px" width="15" height="14"><rect x="0.9" y="0" width="5" height="1.8" fill="#d2d2d2"/><rect x="7" y="0" width="6" height="1.8" fill="#d2d2d2"/><rect x="2.9" y="3.1" width="5" height="1.8" fill="#d2d2d2"/><rect x="9.1" y="3.1" width="3.9" height="1.8" fill="#d2d2d2"/><circle cx="3.5" cy="9.5" r="3.6" fill="#d2d2d2"/><circle cx="3.5" cy="7.5" r="0.75" fill="#1a1a1a"/><rect x="3" y="8.7" width="1.1" height="3" fill="#1a1a1a"/><polygon points="7.3,6.3 9.2,6.3 9.2,8.2" fill="#d2d2d2"/></svg>
<div class="s" style="left:87px;top:118px;letter-spacing:-0.605px;">分析器</div>
<svg class="a" style="left:67px;top:141.5px" width="16" height="9"><rect x="0" y="1" width="4" height="5" fill="#c6c6c6"/><rect x="4.5" y="3" width="2.5" height="1.2" fill="#c6c6c6"/><rect x="7.6" y="0" width="6" height="7" fill="#c6c6c6"/></svg>
<div class="s" style="left:87px;top:137px;letter-spacing:0.282px;">Microsoft.CSharp</div>
<div class="a" style="left:0;top:154px;width:295px;height:20px;background:#0a78c8"></div>
<svg class="a" style="left:67px;top:160.5px" width="16" height="9"><rect x="0" y="1" width="4" height="5" fill="#c6c6c6"/><rect x="4.5" y="3" width="2.5" height="1.2" fill="#c6c6c6"/><rect x="7.6" y="0" width="6" height="7" fill="#c6c6c6"/></svg>
<div class="s" style="left:87px;top:156px;letter-spacing:0.105px;">NewLife.Core</div>
<svg class="a" style="left:67px;top:179.5px" width="16" height="9"><rect x="0" y="1" width="4" height="5" fill="#c6c6c6"/><rect x="4.5" y="3" width="2.5" height="1.2" fill="#c6c6c6"/><rect x="7.6" y="0" width="6" height="7" fill="#c6c6c6"/></svg>
<div class="s" style="left:87px;top:175px;letter-spacing:0.082px;">System</div>
<svg class="a" style="left:67px;top:198.5px" width="16" height="9"><rect x="0" y="1" width="4" height="5" fill="#c6c6c6"/><rect x="4.5" y="3" width="2.5" height="1.2" fill="#c6c6c6"/><rect x="7.6" y="0" width="6" height="7" fill="#c6c6c6"/></svg>
<div class="s" style="left:87px;top:194px;letter-spacing:0.021px;">System.Core</div>
<svg class="a" style="left:67px;top:217.5px" width="16" height="9"><rect x="0" y="1" width="4" height="5" fill="#c6c6c6"/><rect x="4.5" y="3" width="2.5" height="1.2" fill="#c6c6c6"/><rect x="7.6" y="0" width="6" height="7" fill="#c6c6c6"/></svg>
<div class="s" style="left:87px;top:213px;letter-spacing:-0.102px;">System.Data</div>
<svg class="a" style="left:67px;top:236.5px" width="16" height="9"><rect x="0" y="1" width="4" height="5" fill="#c6c6c6"/><rect x="4.5" y="3" width="2.5" height="1.2" fill="#c6c6c6"/><rect x="7.6" y="0" width="6" height="7" fill="#c6c6c6"/></svg>
<div class="s" style="left:87px;top:232px;letter-spacing:-0.067px;">System.Data.DataSetExtensions</div>
<svg class="a" style="left:67px;top:255.5px" width="16" height="9"><rect x="0" y="1" width="4" height="5" fill="#c6c6c6"/><rect x="4.5" y="3" width="2.5" height="1.2" fill="#c6c6c6"/><rect x="7.6" y="0" width="6" height="7" fill="#c6c6c6"/></svg>
<div class="s" style="left:87px;top:251px;letter-spacing:0.174px;">System.Net.Http</div>
<svg class="a" style="left:67px;top:274.5px" width="16" height="9"><rect x="0" y="1" width="4" height="5" fill="#c6c6c6"/><rect x="4.5" y="3" width="2.5" height="1.2" fill="#c6c6c6"/><rect x="7.6" y="0" width="6" height="7" fill="#c6c6c6"/></svg>
<div class="s" style="left:87px;top:270px;letter-spacing:-0.021px;">System.Xml</div>
<svg class="a" style="left:67px;top:293.5px" width="16" height="9"><rect x="0" y="1" width="4" height="5" fill="#c6c6c6"/><rect x="4.5" y="3" width="2.5" height="1.2" fill="#c6c6c6"/><rect x="7.6" y="0" width="6" height="7" fill="#c6c6c6"/></svg>
<div class="s" style="left:87px;top:289px;letter-spacing:-0.060px;">System.Xml.Linq</div>
<svg class="a" style="left:28px;top:310.5px" width="8" height="11"><polygon points="1.2,1.1 5.9,5.1 1.2,9.1" fill="none" stroke="#f2f2f2" stroke-width="1.15"/></svg>
<svg class="a" style="left:51px;top:311px" width="13" height="10"><path d="M5.3,1.9 A2.7,2.9 0 1 0 5.3,6.5" fill="none" stroke="#6cc26c" stroke-width="2.1"/><path d="M7.6,0.6 V5.6 M9.8,0.6 V5.6 M6.6,2.2 H11 M6.6,4.1 H11" stroke="#6cc26c" stroke-width="1.1"/></svg>
<div class="s" style="left:69px;top:308px;letter-spacing:-0.222px;">FullRedis.cs</div>
<svg class="a" style="left:48px;top:328px" width="16" height="15"><path d="M5.8,0.7 H11.2 L14.3,3.8 V11.3 H5.8 Z" fill="#262626" stroke="#d0d0d0" stroke-width="1.2"/><polygon points="10.8,0.4 14.8,4.3 10.8,4.3" fill="#d0d0d0"/><rect x="-1" y="4.2" width="7.6" height="11" fill="#25272b"/><circle cx="3.9" cy="6.6" r="2.8" fill="#d0d0d0"/><rect x="3.1" y="3" width="1.6" height="3.6" fill="#25272b"/><rect x="2.9" y="8" width="2" height="5.8" fill="#d0d0d0"/></svg>
<div class="s" style="left:69px;top:327px;letter-spacing:0.361px;">packages.config</div>
<svg class="a" style="left:28px;top:348.5px" width="8" height="11"><polygon points="1.2,1.1 5.9,5.1 1.2,9.1" fill="none" stroke="#f2f2f2" stroke-width="1.15"/></svg>
<svg class="a" style="left:51px;top:349px" width="13" height="10"><path d="M5.3,1.9 A2.7,2.9 0 1 0 5.3,6.5" fill="none" stroke="#6cc26c" stroke-width="2.1"/><path d="M7.6,0.6 V5.6 M9.8,0.6 V5.6 M6.6,2.2 H11 M6.6,4.1 H11" stroke="#6cc26c" stroke-width="1.1"/></svg>
<div class="s" style="left:69px;top:346px;letter-spacing:-0.084px;">RedisBase.cs</div>
<svg class="a" style="left:28px;top:367.5px" width="8" height="11"><polygon points="1.2,1.1 5.9,5.1 1.2,9.1" fill="none" stroke="#f2f2f2" stroke-width="1.15"/></svg>
<svg class="a" style="left:51px;top:368px" width="13" height="10"><path d="M5.3,1.9 A2.7,2.9 0 1 0 5.3,6.5" fill="none" stroke="#6cc26c" stroke-width="2.1"/><path d="M7.6,0.6 V5.6 M9.8,0.6 V5.6 M6.6,2.2 H11 M6.6,4.1 H11" stroke="#6cc26c" stroke-width="1.1"/></svg>
<div class="s" style="left:69px;top:365px;letter-spacing:-0.140px;">RedisHash.cs</div>
<svg class="a" style="left:28px;top:386.5px" width="8" height="11"><polygon points="1.2,1.1 5.9,5.1 1.2,9.1" fill="none" stroke="#f2f2f2" stroke-width="1.15"/></svg>
<svg class="a" style="left:51px;top:387px" width="13" height="10"><path d="M5.3,1.9 A2.7,2.9 0 1 0 5.3,6.5" fill="none" stroke="#6cc26c" stroke-width="2.1"/><path d="M7.6,0.6 V5.6 M9.8,0.6 V5.6 M6.6,2.2 H11 M6.6,4.1 H11" stroke="#6cc26c" stroke-width="1.1"/></svg>
<div class="s" style="left:69px;top:384px;letter-spacing:-0.118px;">RedisList.cs</div>
<svg class="a" style="left:28px;top:405.5px" width="8" height="11"><polygon points="1.2,1.1 5.9,5.1 1.2,9.1" fill="none" stroke="#f2f2f2" stroke-width="1.15"/></svg>
<svg class="a" style="left:51px;top:406px" width="13" height="10"><path d="M5.3,1.9 A2.7,2.9 0 1 0 5.3,6.5" fill="none" stroke="#6cc26c" stroke-width="2.1"/><path d="M7.6,0.6 V5.6 M9.8,0.6 V5.6 M6.6,2.2 H11 M6.6,4.1 H11" stroke="#6cc26c" stroke-width="1.1"/></svg>
<div class="s" style="left:69px;top:403px;letter-spacing:-0.092px;">RedisQueue.cs</div>
<svg class="a" style="left:28px;top:424.5px" width="8" height="11"><polygon points="1.2,1.1 5.9,5.1 1.2,9.1" fill="none" stroke="#f2f2f2" stroke-width="1.15"/></svg>
<svg class="a" style="left:51px;top:425px" width="13" height="10"><path d="M5.3,1.9 A2.7,2.9 0 1 0 5.3,6.5" fill="none" stroke="#6cc26c" stroke-width="2.1"/><path d="M7.6,0.6 V5.6 M9.8,0.6 V5.6 M6.6,2.2 H11 M6.6,4.1 H11" stroke="#6cc26c" stroke-width="1.1"/></svg>
<div class="s" style="left:69px;top:422px;letter-spacing:-0.166px;">RedisSet.cs</div>
<svg class="a" style="left:10px;top:443.5px" width="8" height="11"><polygon points="1.2,1.1 5.9,5.1 1.2,9.1" fill="none" stroke="#f2f2f2" stroke-width="1.15"/></svg>
<svg class="a" style="left:31px;top:442.7px" width="15" height="13"><rect x="0.6" y="0.6" width="13.2" height="11.6" fill="#262626" stroke="#6abf6a" stroke-width="1.2"/><path d="M6.2,4 A2.3,2.7 0 1 0 6.2,8.6" fill="none" stroke="#d6d6d6" stroke-width="1.1"/><path d="M8.6,3.4 V9.2 M10.8,3.4 V9.2 M7.6,5.2 H11.8 M7.6,7.4 H11.8" stroke="#d6d6d6" stroke-width="0.9"/></svg>
<div class="s" style="left:51px;top:441px;letter-spacing:0.017px;">NewLife.Redis2</div>
<svg class="a" style="left:10px;top:464px" width="8" height="8"><polygon points="0.5,7 6.8,0.6 6.8,7" fill="#f0f0f0"/></svg>
<svg class="a" style="left:31px;top:461.7px" width="15" height="13"><rect x="0.6" y="0.6" width="13.2" height="11.6" fill="#262626" stroke="#6abf6a" stroke-width="1.2"/><path d="M6.2,4 A2.3,2.7 0 1 0 6.2,8.6" fill="none" stroke="#d6d6d6" stroke-width="1.1"/><path d="M8.6,3.4 V9.2 M10.8,3.4 V9.2 M7.6,5.2 H11.8 M7.6,7.4 H11.8" stroke="#d6d6d6" stroke-width="0.9"/></svg>
<div class="s" style="left:51px;top:460px;letter-spacing:0.280px;">Test</div>
<svg class="a" style="left:28px;top:481.5px" width="8" height="11"><polygon points="1.2,1.1 5.9,5.1 1.2,9.1" fill="none" stroke="#f2f2f2" stroke-width="1.15"/></svg>
<svg class="a" style="left:49px;top:480px" width="16" height="15"><path d="M7.8,6.8 L2,12.4" stroke="#cdcdcd" stroke-width="3.1" stroke-linecap="round"/><circle cx="9.6" cy="4.8" r="4.5" fill="#cdcdcd"/><path d="M10.2,4.2 L14.6,-0.2" stroke="#25272b" stroke-width="2.3"/></svg>
<div class="s" style="left:69px;top:479px;letter-spacing:0.329px;">Properties</div>
<svg class="a" style="left:28px;top:500.5px" width="8" height="11"><polygon points="1.2,1.1 5.9,5.1 1.2,9.1" fill="none" stroke="#f2f2f2" stroke-width="1.15"/></svg>
<svg class="a" style="left:49px;top:502.5px" width="16" height="9"><rect x="0" y="1" width="4" height="5" fill="#c6c6c6"/><rect x="4.5" y="3" width="2.5" height="1.2" fill="#c6c6c6"/><rect x="7.6" y="0" width="6" height="7" fill="#c6c6c6"/></svg>
<div class="s" style="left:69px;top:498px;letter-spacing:-1.879px;">引用</div>
</div>
<div class="a" style="left:916px;top:0;width:18px;height:548px;background:#2d2f33"></div>
<div class="a" style="left:916px;top:0;width:1px;height:548px;background:#38393e"></div>
<div class="a" style="left:919px;top:-43px;width:14px;writing-mode:vertical-rl;text-orientation:sideways;font-size:12px;line-height:14px;color:#eeeeee;white-space:nowrap">解决方案资源管理器</div>
<div class="a" style="left:919px;top:77.5px;width:14px;writing-mode:vertical-rl;text-orientation:sideways;font-size:12px;line-height:14px;color:#eeeeee;white-space:nowrap">团队资源管理器</div>
<div class="a" style="left:919px;top:174px;width:14px;writing-mode:vertical-rl;text-orientation:sideways;font-size:12px;line-height:14px;color:#eeeeee;white-space:nowrap">通知</div>
<svg class="a" style="left:0;top:0" width="934" height="548"><ellipse cx="131.6" cy="107.5" rx="70.6" ry="15.4" fill="none" stroke="#d02b30" stroke-width="1.2"/><ellipse cx="121.4" cy="257" rx="54" ry="23.7" fill="none" stroke="#d02b30" stroke-width="1.2"/><ellipse cx="747.4" cy="199" rx="70.8" ry="17.6" fill="none" stroke="#d02b30" stroke-width="1.2"/></svg>
<svg class="a" style="left:860px;top:508px" width="74" height="40"><text x="6.5" y="28.6" textLength="62.5" lengthAdjust="spacingAndGlyphs" font-family="Liberation Sans" font-size="20" font-weight="900" fill="#ffffff" stroke="#ffffff" stroke-width="3" stroke-linejoin="round">全攻略</text><text x="6.5" y="28.6" textLength="62.5" lengthAdjust="spacingAndGlyphs" font-family="Liberation Sans" font-size="20" font-weight="900" fill="#b8986c" stroke="#b8986c" stroke-width="0.5" stroke-linejoin="round">全攻略</text></svg>
</body></html>
